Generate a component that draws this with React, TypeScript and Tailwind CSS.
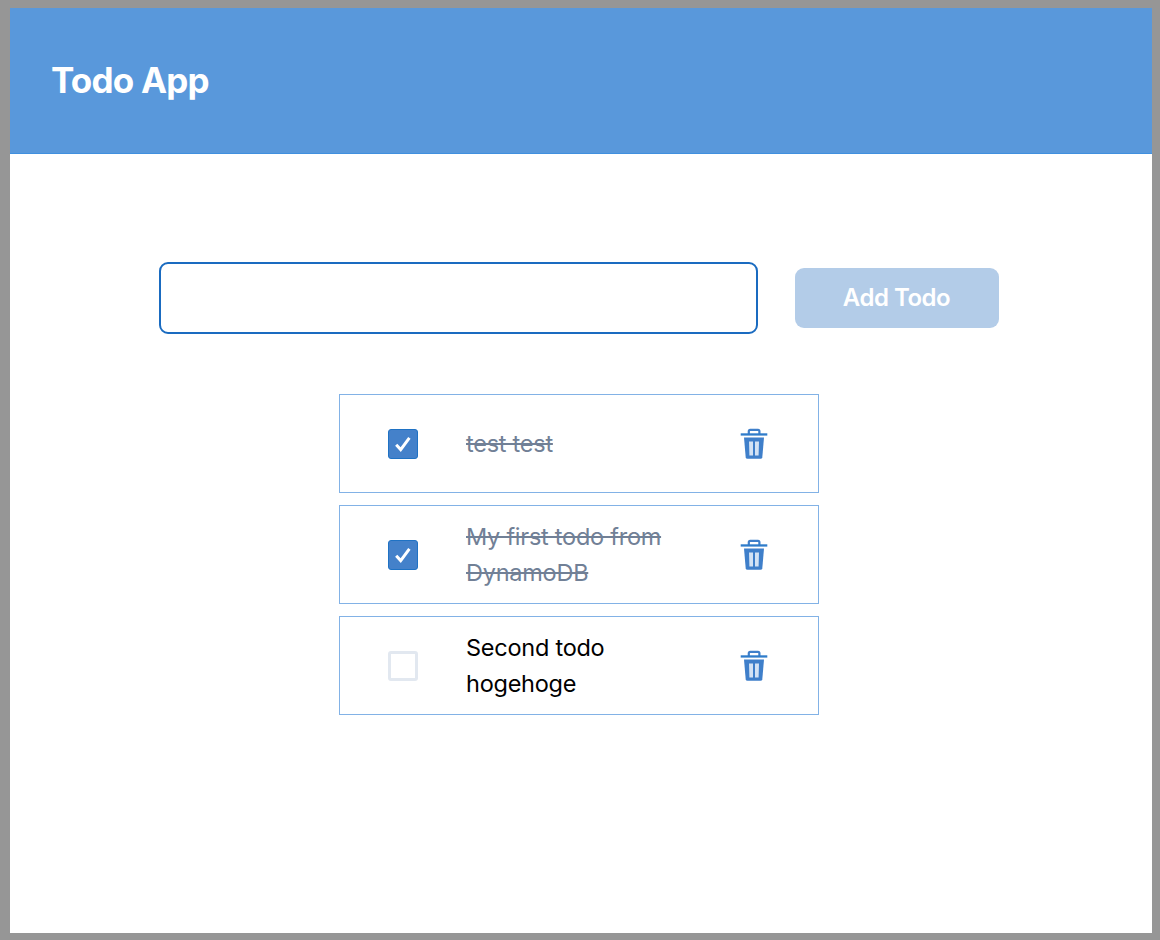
import { useState } from "react";

type Todo = { id: number; text: string; done: boolean };

const initialTodos: Todo[] = [
  { id: 1, text: "test test", done: true },
  { id: 2, text: "My first todo from DynamoDB", done: true },
  { id: 3, text: "Second todo hogehoge", done: false },
];

function TrashIcon() {
  return (
    <svg width="28" height="32" viewBox="0 0 28 32" fill="none">
      <path d="M8.8 6V3.2Q8.8 1.8 10.2 1.8H18Q19.4 1.8 19.4 3.2V6" stroke="#3f7fca" strokeWidth="2.2" />
      <rect x="0.7" y="5.3" width="26.6" height="2.3" fill="#2f7cca" />
      <path
        fill="#3f7fca"
        d="M4 9.6H24L22.3 29.2Q22.1 30.8 20.5 30.8H7.5Q5.9 30.8 5.7 29.2Z"
      />
      <path d="M9 13.6H13V27.6H9.4ZM15 13.6H19L18.6 27.6H15Z" fill="#d3e2f4" />
    </svg>
  );
}

function Checkbox({ checked, onChange }: { checked: boolean; onChange: () => void }) {
  return (
    <button
      role="checkbox"
      aria-checked={checked}
      aria-label="Done"
      onClick={onChange}
      className={
        checked
          ? "flex size-[30px] shrink-0 items-center justify-center rounded-[3px] border border-[#1f72c4] bg-[#4481ca]"
          : "size-[30px] shrink-0 rounded-[3px] border-3 border-[#e2e8f0] bg-white"
      }
    >
      {checked && (
        <svg width="18" height="18" viewBox="0 0 18 18" fill="none">
          <path d="M2.2 9.8L6.7 14.6L15.4 2.8" stroke="white" strokeWidth="3" />
        </svg>
      )}
    </button>
  );
}

export default function App() {
  const [todos, setTodos] = useState(initialTodos);
  const [text, setText] = useState("");

  const toggle = (id: number) =>
    setTodos(todos.map((t) => (t.id === id ? { ...t, done: !t.done } : t)));
  const remove = (id: number) => setTodos(todos.filter((t) => t.id !== id));
  const add = () => {
    if (!text) return;
    setTodos([...todos, { id: Date.now(), text, done: false }]);
    setText("");
  };

  return (
    <div className="h-[940px] w-[1160px] bg-[#969696] pt-2 pr-2 pb-[7px] pl-2.5 font-['Inter','Liberation_Sans',sans-serif]">
      <div className="h-full bg-white">
        <header className="flex h-[146px] items-center border-b border-[#4090df] bg-[#5998db] pb-0.5 pl-[41px]">
          <h1 className="text-[35px] leading-[44px] font-bold tracking-[-0.8px] text-white">Todo App</h1>
        </header>
        <main className="pt-[108px]">
          <div className="flex items-center pl-[149px]">
            <input
              aria-label="New todo"
              value={text}
              onChange={(e) => setText(e.target.value)}
              className="h-[72px] w-[599px] rounded-[9px] border-[2.5px] border-[#1a6bc0] px-6 text-2xl outline-none"
            />
            <button
              onClick={add}
              className="ml-[36.5px] h-[60px] w-[204px] rounded-[9px] bg-[#b3cce8] text-[24px] font-semibold tracking-[-0.5px] text-white"
            >
              Add Todo
            </button>
          </div>
          <ul className="mt-[60px] ml-[328.5px] flex w-[480px] flex-col gap-3">
            {todos.map((todo) => (
              <li key={todo.id} className="flex h-[99px] items-center border border-[#82b2e6] pr-[49.5px] pl-[48.5px]">
                <Checkbox checked={todo.done} onChange={() => toggle(todo.id)} />
                <p
                  className={
                    todo.done
                      ? "ml-12 w-[210px] text-[23.5px] leading-9 tracking-[-0.25px] text-[#718096] line-through decoration-[1.5px]"
                      : "ml-12 w-[210px] text-[23.5px] leading-9 tracking-[-0.25px] text-black"
                  }
                >
                  {todo.text}
                </p>
                <button aria-label="Delete" onClick={() => remove(todo.id)} className="ml-auto">
                  <TrashIcon />
                </button>
              </li>
            ))}
          </ul>
        </main>
      </div>
    </div>
  );
}
